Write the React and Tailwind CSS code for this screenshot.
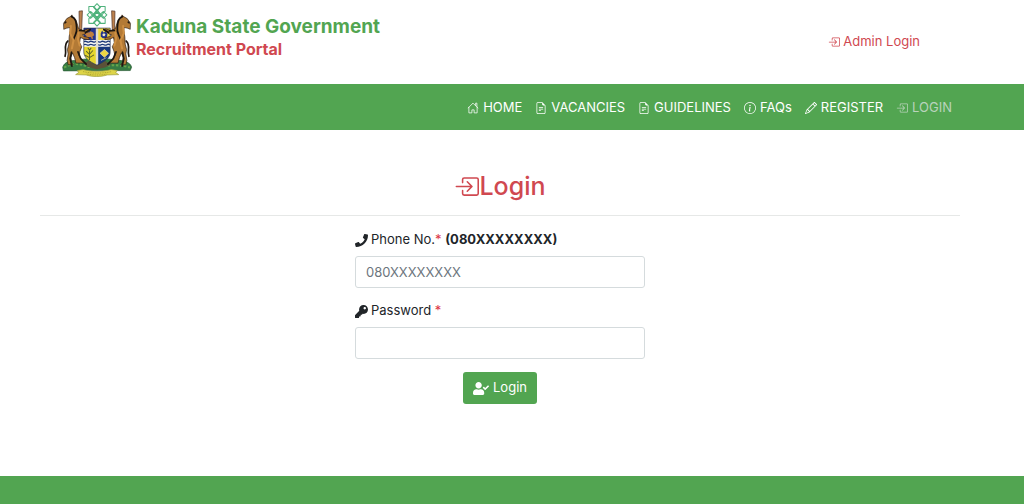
import { useState } from "react";
import {
  BsBoxArrowInRight,
  BsFileEarmarkText,
  BsInfoCircle,
  BsPencil,
} from "react-icons/bs";
import { FaKey, FaPhone, FaUserCheck } from "react-icons/fa";

const HouseIcon = ({ className }) => (
  <svg
    className={className}
    viewBox="0 0 16 16"
    fill="none"
    stroke="currentColor"
    strokeLinejoin="round"
    strokeLinecap="round"
    aria-hidden="true"
  >
    <path d="M2.5 7v7.5h4v-4h3v4h4V7" />
    <path d="M1.5 8 8 1.5 14.5 8" />
    <path d="M11.5 4.5v-3h1.7v4.5" />
  </svg>
);

const Horse = () => (
  <g strokeLinejoin="round" strokeLinecap="round">
    <path
      d="M44 69 53 56l11-6 4-5 3 6 8 7 4 11 5 17 13 5 16-5 4 5-15 10-7 3 5 5 14 3 1 6-16-2-10-5-2 16 6 12-5 13-3 13 9 14 9 8H80l-4-16-6-14-5 13 2 15 5 7H57l-3-13 3-19-2-13 4-16 1-21 3-20-1-8-9 2-8 3Z"
      fill="#b37a36"
      stroke="#2b1c12"
      strokeWidth="2"
    />
    <path
      d="M67 50c13 4 14 18 15 33 2 16-5 20-9 34"
      fill="none"
      stroke="#19130f"
      strokeWidth="5"
    />
    <path
      d="M56 122c-14 13-2 26-8 45M67 155l-4 19 5 22M86 154l8 20 16 16M108 97l14-9M91 91l14 1"
      fill="none"
      stroke="#1d1712"
      strokeWidth="5"
    />
    <path
      d="m65 78-2 22 10 20-5 24M88 98l-2 18 5 19"
      fill="none"
      stroke="#cf9043"
      strokeWidth="6"
    />
    <path d="m45 68 5-5 3 4-6 5z" fill="#211915" />
  </g>
);

const StaffAndHorse = () => (
  <>
    <path
      d="m89 34 10-1-2 52-5 31h-6l4-35Z"
      fill="#bd824f"
      stroke="#4b2d20"
      strokeWidth="2"
    />
    <Horse />
  </>
);

const CoatOfArms = ({ className }) => (
  <svg
    className={className}
    viewBox="36 10 212 218"
    role="img"
    aria-label="Kaduna State coat of arms"
  >
    {/* interlaced knot */}
    <g
      fill="none"
      stroke="#4fb27c"
      strokeWidth="3"
      strokeLinejoin="round"
    >
      <path d="m142 12 10 11-20 21 10 10 10-10-20-21Z" />
      <path d="m142 78 10-11-20-21 10-10 10 10-20 21Z" />
      <path d="m113 45 10-10 23 20-4 6-4-6 23-20 10 10-10 10-23-20 4-6 4 6-23 20Z" />
      <path d="M118 20h14l20 22 14 14v14h-14l-14-14-20-22Z" />
      <path d="M166 20h-14l-20 22-14 14v14h14l14-14 20-22Z" />
    </g>

    {/* mound */}
    <path
      d="M41 199c6-18 26-19 40-20 32-7 86-8 119 0 20 0 40 5 44 20l-4 10-197 1Z"
      fill="#367b43"
      stroke="#285b34"
      strokeWidth="2"
    />
    <path
      d="M45 200c28-15 47-11 67-3 29 8 71-14 127 3"
      fill="none"
      stroke="#67a64b"
      strokeWidth="6"
      strokeDasharray="7 5"
    />
    <path
      d="m105 187 15-8 11 9 12-9 10 9 13-7 18 11-19 8-24 5-28-7Z"
      fill="#5b5138"
    />

    {/* shield */}
    <clipPath id="shield">
      <path d="M103 84h78v70c0 17-17 29-39 39-22-10-39-22-39-39Z" />
    </clipPath>
    <g clipPath="url(#shield)">
      <path d="M103 84h39v47h-39z" fill="#26348f" />
      <path d="M142 84h39v47h-39z" fill="#f1d945" />
      <path d="M103 137h39v58h-39z" fill="#e6d62e" />
      <path d="M142 137h39v58h-39z" fill="#17377e" />
      <path
        d="m106 102 5-6 8 1 4-4 8 4 3 8-5 3 1 8-3 1-3-7h-8l-3 7-3-1 1-9Z"
        fill="#c0803f"
      />
      <path d="m153 99 4-8 4 6 6-2 6 5-2 13-12 1-6-5Z" fill="#24358c" />
      <path d="m158 101 5-2 4 4-3 5-5-1Z" fill="#f5eac3" />
      <path d="M103 119h78v20h-78z" fill="#f4f5f4" />
      <path
        d="M103 124c7-5 10 5 17 0s10 5 17 0 10 5 17 0 10 5 17 0 10 3 12 0M103 133c7-5 10 5 17 0s10 5 17 0 10 5 17 0 10 5 17 0 10 3 12 0"
        fill="none"
        stroke="#1c3778"
        strokeWidth="4"
      />
      <path
        d="M120 178v-27m0 10-10-9m10 9 10-11m-10 21-13-7m13 7 13-8m-13-14-5-7m5 7 5-7"
        fill="none"
        stroke="#5c652a"
        strokeWidth="3"
      />
      <path
        d="m151 158 13-11 12 11-12 12Zm3 21 16-8"
        fill="#edd642"
        stroke="#ede2a0"
        strokeWidth="2"
      />
      <path d="M142 84v111" stroke="#eeeae0" strokeWidth="7" />
      <path d="M142 84v111" stroke="#a29c80" strokeWidth="1" />
    </g>
    <path
      d="M103 84h78v70c0 17-17 29-39 39-22-10-39-22-39-39Z"
      fill="none"
      stroke="#253355"
      strokeWidth="2"
    />

    <StaffAndHorse />
    <g transform="matrix(-1 0 0 1 284 0)">
      <StaffAndHorse />
    </g>

    {/* motto ribbon */}
    <path
      d="m84 209 17-3c24 7 59 7 83 0l18 3-5 6 9 6-34 1c-19 6-43 6-62 0l-31-1 9-6Z"
      fill="#ded547"
      stroke="#9a9c3c"
      strokeWidth="2"
    />
    <path
      d="M101 212c25 6 59 6 84 0M112 219c18 4 42 4 60 0"
      fill="none"
      stroke="#998f2d"
      strokeWidth="2"
      strokeDasharray="3 2"
    />
  </svg>
);

const navLinks = [
  { label: "HOME", icon: HouseIcon },
  { label: "VACANCIES", icon: BsFileEarmarkText },
  { label: "GUIDELINES", icon: BsFileEarmarkText },
  { label: "FAQs", icon: BsInfoCircle },
  { label: "REGISTER", icon: BsPencil },
  { label: "LOGIN", icon: BsBoxArrowInRight, active: true },
];

const Header = () => (
  <header className="flex h-21 items-center justify-between pl-15 pr-26">
    <a href="#home" className="flex items-start gap-[2px] pb-1">
      <CoatOfArms className="h-[74px] w-[74px]" />
      <div className="pt-3 font-bold">
        <p className="text-[19px] leading-6 text-[#52a551]">
          Kaduna State Government
        </p>
        <p className="text-base leading-5 text-[#d04850]">Recruitment Portal</p>
      </div>
    </a>
    <a
      href="#admin"
      className="flex items-center gap-[3px] text-[13px] text-[#d04850]"
    >
      <BsBoxArrowInRight className="size-3" />
      Admin Login
    </a>
  </header>
);

const Navbar = () => (
  <nav className="flex h-[46px] items-center justify-end gap-[13px] bg-[#52a551] pr-18 pt-[2px]">
    {navLinks.map(({ label, icon: Icon, active }) => (
      <a
        key={label}
        href={`#${label.toLowerCase()}`}
        className={`flex items-center gap-1 text-[13px] ${
          active ? "text-[#b9d3bb]" : "text-white"
        }`}
      >
        <Icon className="size-3" />
        {label}
      </a>
    ))}
  </nav>
);

const LoginForm = () => {
  const [formData, setFormData] = useState({ phone: "", password: "" });

  const handleChange = (e) => {
    const { name, value } = e.target;
    setFormData((prev) => ({ ...prev, [name]: value }));
  };

  const handleSubmit = (e) => {
    e.preventDefault();
  };

  return (
    <form
      onSubmit={handleSubmit}
      className="mx-auto flex w-full max-w-[290px] flex-col pt-[14px] text-[13px]"
    >
      <label htmlFor="phone" className="flex h-5 items-center gap-[3px]">
        <FaPhone className="size-[13px]" />
        <span>
          Phone No.<span className="text-[#dc3545]">*</span>{" "}
          <strong>(080XXXXXXXX)</strong>
        </span>
      </label>
      <input
        className="mt-[6px] h-8 w-full rounded-[3px] border border-[#d5dbdd] px-[10px] placeholder:text-[#6c757d] focus:outline-none"
        id="phone"
        name="phone"
        type="text"
        placeholder="080XXXXXXXX"
        value={formData.phone}
        onChange={handleChange}
      />

      <label
        htmlFor="password"
        className="mt-[13px] flex h-5 items-center gap-[3px]"
      >
        <FaKey className="size-[13px]" />
        <span>
          Password <span className="text-[#dc3545]">*</span>
        </span>
      </label>
      <input
        className="mt-[6px] h-8 w-full rounded-[3px] border border-[#d5dbdd] px-[10px] focus:outline-none"
        id="password"
        name="password"
        type="password"
        value={formData.password}
        onChange={handleChange}
      />

      <button
        type="submit"
        className="mt-[13px] flex h-8 items-center gap-1 self-center rounded-[3px] bg-[#52a551] px-[10px] text-white"
      >
        <FaUserCheck className="h-[13px] w-4" />
        Login
      </button>
    </form>
  );
};

const App = () => {
  return (
    <div className="flex min-h-screen flex-col bg-white font-['Inter',sans-serif] text-[#212529]">
      <Header />
      <Navbar />
      <main className="grow pb-12 pl-10 pr-16 pt-10">
        <h1 className="flex items-center justify-center border-b border-[#e6e8e7] pb-[13px] text-[25px] font-medium leading-8 text-[#d04850]">
          <BsBoxArrowInRight className="size-[25px]" />
          Login
        </h1>
        <LoginForm />
      </main>
      <footer className="h-7 bg-[#52a551]" />
    </div>
  );
};

export default App;
